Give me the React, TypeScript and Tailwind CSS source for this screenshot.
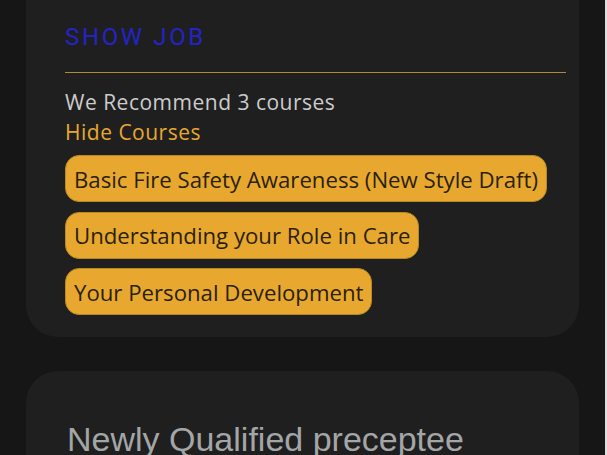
import React from "react";

const courses = [
  "Basic Fire Safety Awareness (New Style Draft)",
  "Understanding your Role in Care",
  "Your Personal Development",
];

export default function App() {
  return (
    <div className="flex h-[455px] w-[607px] overflow-hidden bg-[#161616]">
      <div className="flex flex-1 flex-col pl-[26px] pr-[26px]">
        <div className="rounded-b-[32px] bg-[#1f1f1f] pb-[22px] pl-[39px] pr-[13px] pt-[23px]">
          <div
            className="text-[24px] leading-[28px] tracking-[0.11em] text-[#2424c6]"
            style={{ fontFamily: "Roboto, Arial, sans-serif" }}
          >
            SHOW JOB
          </div>
          <div className="mt-[21px] h-px bg-[#b08a36]" />
          <div style={{ fontFamily: "'Open Sans', 'Noto Sans', sans-serif" }}>
            <div className="mt-[14px] text-[21px] leading-[30px] tracking-[0.5px] text-[#cccccc]">
              We Recommend 3 courses
            </div>
            <div className="text-[21px] leading-[30px] tracking-[0.5px] text-[#e8a830]">
              Hide Courses
            </div>
            <div className="mt-[8px] flex flex-col items-start gap-[9.5px]">
              {courses.map((c) => (
                <div
                  key={c}
                  className="flex h-[47px] items-center rounded-[14px] border border-[#b8891f] bg-[#e8a830] px-[8px] pt-[2px] text-[22.2px] text-[#2a1f05]"
                >
                  {c}
                </div>
              ))}
            </div>
          </div>
        </div>
        <div className="mt-[34px] flex-1 rounded-t-[32px] bg-[#1f1f1f] pl-[41px] pt-[48px]">
          <div
            className="text-[34px] leading-[40px] text-[#a3a6a6]"
            style={{ fontFamily: "Arial, 'Liberation Sans', sans-serif" }}
          >
            Newly Qualified preceptee
          </div>
        </div>
      </div>
      <div className="w-[2px] bg-[#dedede]" />
    </div>
  );
}
